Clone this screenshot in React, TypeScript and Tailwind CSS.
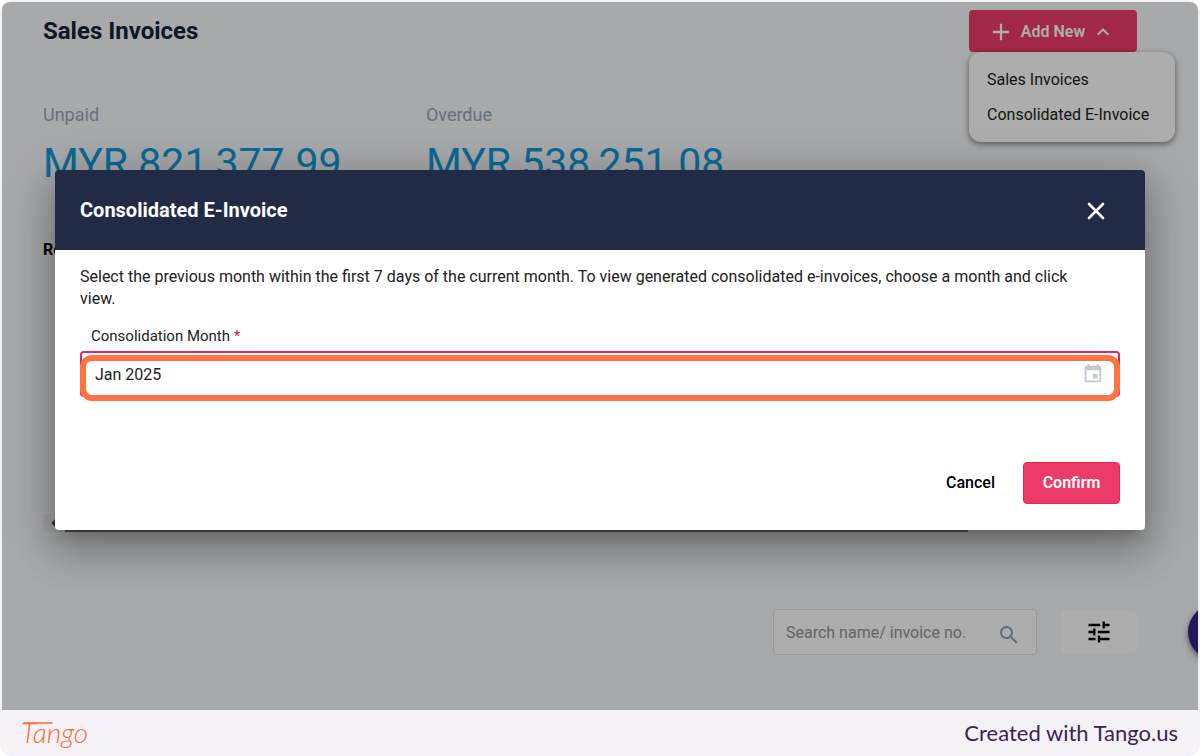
import React from "react";
import { X } from "lucide-react";
import {
  MdAdd,
  MdArrowLeft,
  MdEvent,
  MdExpandLess,
  MdSearch,
  MdTune,
} from "react-icons/md";

const stats = [
  { label: "Unpaid", value: "MYR 821,377.99" },
  { label: "Overdue", value: "MYR 538,251.08" },
];

const menuItems = ["Sales Invoices", "Consolidated E-Invoice"];

const AddNewMenu = () => {
  return (
    <div className="relative">
      <button className="flex h-[42px] w-[168px] items-center justify-center gap-1.5 rounded bg-[#ed3b67] pr-1 pt-0.5 text-base font-semibold text-white">
        <MdAdd size={28} />
        Add New
        <MdExpandLess size={24} />
      </button>
      <ul className="absolute left-0 top-full w-[206px] rounded-xl bg-white py-[10px] text-base text-[#212121] shadow-[0_2px_6px_rgba(0,0,0,0.5)]">
        {menuItems.map((item) => (
          <li key={item}>
            <a href="#" className="block px-[18px] leading-[35px]">
              {item}
            </a>
          </li>
        ))}
      </ul>
    </div>
  );
};

const InvoicesPage = () => {
  return (
    <main className="h-[708px] bg-[#f7f9fb] pl-[41px] pr-[61px] pt-2">
      <header className="flex items-center justify-between">
        <h1 className="text-2xl font-bold text-[#1a2140]">Sales Invoices</h1>
        <AddNewMenu />
      </header>

      <dl className="mt-[51px] flex">
        {stats.map((stat) => (
          <div key={stat.label} className="w-[35%]">
            <dt className="text-lg leading-6 text-[#9ba5bf]">{stat.label}</dt>
            <dd className="mt-2 text-[41px] leading-[56px] text-[#109ddd]">
              {stat.value}
            </dd>
          </div>
        ))}
      </dl>

      <section className="mt-[47px]">
        <h2 className="text-base font-bold leading-6 text-black">Re</h2>
        <div className="mt-[252px] flex h-[18px] items-center bg-[#f1f1f1]">
          <MdArrowLeft size={22} className="text-[#505050]" />
          <div className="h-full w-[903px] bg-[#7a7a7a]" />
        </div>
      </section>

      <div className="mt-[77px] flex items-center justify-end gap-6">
        <div className="relative h-[46px] w-[264px]">
          <input
            type="text"
            aria-label="Search invoices"
            placeholder="Search name/ invoice no."
            className="h-full w-full rounded border border-[#e0e0e0] bg-white pl-3 pr-12 text-base placeholder:text-[#949494]"
          />
          <MdSearch
            size={24}
            className="absolute right-4 top-3.5 text-[#8f9bb8]"
          />
        </div>
        <button
          aria-label="Filters"
          className="flex h-[42px] w-[76px] items-center justify-center rounded bg-white text-black"
        >
          <MdTune size={28} />
        </button>
      </div>

      <button
        aria-label="Help"
        className="absolute -right-[46px] bottom-[50px] size-14 rounded-full bg-[#32268a] shadow-[0_3px_6px_rgba(0,0,0,0.5)]"
      />
    </main>
  );
};

const ConsolidatedDialog = () => {
  return (
    <div
      role="dialog"
      aria-labelledby="dialog-title"
      className="overflow-hidden rounded shadow-[0_11px_15px_-7px_rgba(0,0,0,0.2),0_24px_38px_3px_rgba(0,0,0,0.14),0_9px_46px_8px_rgba(0,0,0,0.2)]"
    >
      <div className="flex h-20 items-center justify-between bg-[#212b46] pl-[25px] pr-[35px] text-white">
        <h2 id="dialog-title" className="text-xl font-bold">
          Consolidated E-Invoice
        </h2>
        <button aria-label="Close" className="pt-0.5">
          <X size={28} strokeWidth={2.25} />
        </button>
      </div>

      <div className="bg-white px-[25px] pb-[26px] pt-4 text-base text-[#212121]">
        <p className="pr-6 leading-[22px]">
          Select the previous month within the first 7 days of the current
          month. To view generated consolidated e-invoices, choose a month and
          click view.
        </p>

        <label
          htmlFor="month"
          className="mt-3.5 block pl-[11px] text-[15px] leading-6"
        >
          Consolidation Month <span className="text-[#c62828]">*</span>
        </label>
        <div className="relative mt-[3px]">
          <input
            id="month"
            type="text"
            readOnly
            value="Jan 2025"
            className="h-[46px] w-full rounded border-2 border-[#e6265f] bg-white pl-[13px] text-base"
          />
          <MdEvent
            size={22}
            className="absolute right-4 top-3 text-[#c3c8d1]"
          />
          <div className="absolute inset-x-0 top-1 h-[46px] rounded-xl border-[6px] border-[#ff7442]" />
        </div>

        <div className="mt-[65px] flex items-center justify-end gap-7">
          <button className="font-medium text-black">Cancel</button>
          <button className="h-[42px] w-[97px] rounded border border-[#e8205a] bg-[#ed3b67] font-semibold text-white">
            Confirm
          </button>
        </div>
      </div>
    </div>
  );
};

const Footer = () => {
  return (
    <footer className="flex h-11 items-center justify-between pl-[19px] pr-5">
      <a
        href="#"
        className="relative font-['Lato'] text-[28px] font-light italic leading-8 text-[#ff6a35]"
      >
        Tango
        <svg
          viewBox="0 0 30 2"
          className="absolute left-0.5 top-1.5 h-0.5 w-[30px]"
          fill="none"
          stroke="currentColor"
          strokeWidth="1.5"
          strokeLinecap="round"
        >
          <path d="M1 1H29" />
        </svg>
      </a>
      <p className="font-['Lato'] text-[22px] text-[#3c2450]">
        Created with Tango.us
      </p>
    </footer>
  );
};

const App = () => {
  return (
    <div className="bg-white font-['Roboto',sans-serif]">
      <div className="rounded-xl bg-[#f4f2f7] p-0.5">
        <div className="relative overflow-hidden rounded-t-lg">
          <InvoicesPage />
          <div className="absolute inset-0 bg-black/32 px-[53px] pt-[168px]">
            <ConsolidatedDialog />
          </div>
        </div>
        <Footer />
      </div>
    </div>
  );
};

export default App;
